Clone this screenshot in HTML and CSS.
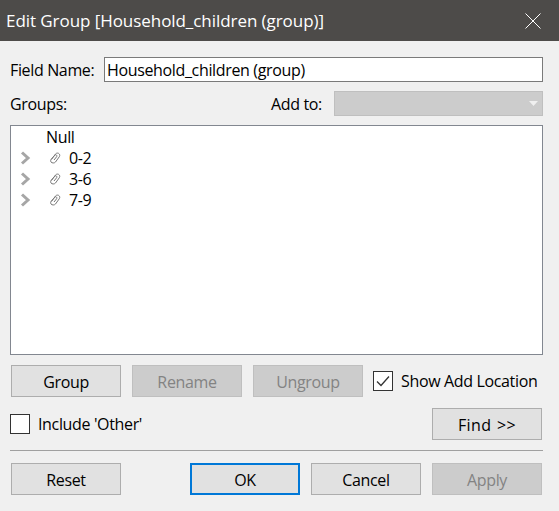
FILE: index.html
```html
<!DOCTYPE html>
<html>
<head>
    <title>Edit Group</title>
    <link rel="stylesheet" href="styles.css">
</head>
<body>
    <div class="titlebar">
        <span class="title">Edit Group [Household_children (group)]</span>
        <svg class="close" width="16" height="16" viewBox="0 0 16 16"><path d="M0.5 0.5L15.5 15.5M15.5 0.5L0.5 15.5" stroke="#fff" stroke-width="1" fill="none"/></svg>
    </div>
    <div class="content">
        <div class="row name-row">
            <label class="name-label">Field Name:</label>
            <input type="text" class="name-input" value="Household_children (group)">
        </div>
        <div class="row groups-row">
            <span class="groups-label">Groups:</span>
            <span class="add-label">Add to:</span>
            <div class="select">
                <svg width="9" height="5" viewBox="0 0 9 5"><path d="M0 0H9L4.5 5Z" fill="#f0f0f0"/></svg>
            </div>
        </div>
        <div class="list">
            <div class="item"><span class="leaf">Null</span></div>
            <div class="item">
                <svg class="chevron" width="11" height="14" viewBox="0 0 11 14"><path d="M2 1.500L8 7L2 12.500" stroke="#a6a6a6" stroke-width="3" fill="none"/></svg>
                <svg class="clip" width="12" height="12" viewBox="0 0 12 12"><path d="M2.500 7.500L6.500 2C7.500 0.800 9.500 0.800 10.300 2C11 3 10.800 4 10.200 4.900L6.500 10C5.500 11.300 3 11.300 2 10C1.400 9 1.600 8 2.200 7.200L5.800 3.200C6.300 2.600 7.500 2.700 7.800 3.500C8 4 7.800 4.500 7.500 4.900L5 8" stroke="#777" stroke-width="1" fill="none"/></svg>
                <span>0-2</span>
            </div>
            <div class="item">
                <svg class="chevron" width="11" height="14" viewBox="0 0 11 14"><path d="M2 1.500L8 7L2 12.500" stroke="#a6a6a6" stroke-width="3" fill="none"/></svg>
                <svg class="clip" width="12" height="12" viewBox="0 0 12 12"><path d="M2.500 7.500L6.500 2C7.500 0.800 9.500 0.800 10.300 2C11 3 10.800 4 10.200 4.900L6.500 10C5.500 11.300 3 11.300 2 10C1.400 9 1.600 8 2.200 7.200L5.800 3.200C6.300 2.600 7.500 2.700 7.800 3.500C8 4 7.800 4.500 7.500 4.900L5 8" stroke="#777" stroke-width="1" fill="none"/></svg>
                <span>3-6</span>
            </div>
            <div class="item">
                <svg class="chevron" width="11" height="14" viewBox="0 0 11 14"><path d="M2 1.500L8 7L2 12.500" stroke="#a6a6a6" stroke-width="3" fill="none"/></svg>
                <svg class="clip" width="12" height="12" viewBox="0 0 12 12"><path d="M2.500 7.500L6.500 2C7.500 0.800 9.500 0.800 10.300 2C11 3 10.800 4 10.200 4.900L6.500 10C5.500 11.300 3 11.300 2 10C1.400 9 1.600 8 2.200 7.200L5.800 3.200C6.300 2.600 7.500 2.700 7.800 3.500C8 4 7.800 4.500 7.500 4.900L5 8" stroke="#777" stroke-width="1" fill="none"/></svg>
                <span>7-9</span>
            </div>
        </div>
        <div class="row action-row">
            <button class="btn">Group</button>
            <button class="btn disabled">Rename</button>
            <button class="btn disabled">Ungroup</button>
            <div class="check location-check">
                <span class="box">
                    <svg width="14" height="12" viewBox="0 0 14 12"><path d="M1 6.500L5 10.500L13 1.500" stroke="#333" stroke-width="1.300" fill="none"/></svg>
                </span>
                <span>Show Add Location</span>
            </div>
        </div>
        <div class="row other-row">
            <div class="check">
                <span class="box"></span>
                <span>Include 'Other'</span>
            </div>
            <button class="btn find">Find &gt;&gt;</button>
        </div>
        <div class="row footer">
            <button class="btn">Reset</button>
            <button class="btn default ok">OK</button>
            <button class="btn">Cancel</button>
            <button class="btn disabled">Apply</button>
        </div>
    </div>
</body>
</html>
```

FILE: styles.css
```css
html, body {
    margin: 0;
    height: 100%;
}
body {
    background-color: #f0f0f0;
    font-family: "Open Sans", "Noto Sans", sans-serif;
    font-size: 16px;
    letter-spacing: -0.35px;
    color: #000;
    overflow: hidden;
}
.titlebar {
    height: 41px;
    background-color: #4d4b49;
    color: #fff;
    display: flex;
    align-items: center;
    justify-content: space-between;
    padding: 0 18px 0 6px;
    box-sizing: border-box;
}
.title {
    font-size: 17px;
    letter-spacing: -0.06px;
}
.content {
    padding: 16px 16px 0 10px;
}
.row {
    display: flex;
    align-items: center;
}
.name-row {
    height: 25px;
}
.name-label {
    width: 94px;
}
.name-input {
    flex: 1;
    height: 25px;
    box-sizing: border-box;
    border: 1px solid #7a7a7a;
    padding: 0 2px;
    margin: 0;
    outline: none;
    font: inherit;
    letter-spacing: inherit;
    background-color: #fff;
    color: #000;
}
.groups-row {
    height: 25px;
    margin-top: 9px;
}
.groups-label {
    width: 261px;
}
.add-label {
    width: 63px;
}
.select {
    flex: 1;
    height: 25px;
    box-sizing: border-box;
    background-color: #cccccc;
    border: 1px solid #bfbfbf;
    display: flex;
    align-items: center;
    justify-content: flex-end;
    padding-right: 4px;
}
.list {
    height: 230px;
    box-sizing: border-box;
    margin-top: 9px;
    background-color: #fff;
    border: 1px solid #828790;
    padding: 0 0 0 9px;
}
.item {
    height: 21px;
    display: flex;
    align-items: center;
}
.leaf {
    margin-left: 26px;
}
.chevron {
    flex: none;
}
.clip {
    margin-left: 18px;
    margin-right: 8px;
}
.btn {
    width: 110px;
    height: 32px;
    padding: 1px 0 0;
    box-sizing: border-box;
    font: inherit;
    letter-spacing: inherit;
    color: #000;
    background-color: #e1e1e1;
    border: 1px solid #adadad;
}
.btn.disabled {
    background-color: #cccccc;
    border-color: #bfbfbf;
    color: #838383;
}
.btn.default {
    border: 2px solid #0078d7;
}
.btn.find {
    letter-spacing: 0.4px;
    word-spacing: 1px;
}
.action-row {
    margin-top: 10px;
    margin-left: 1px;
    gap: 11px;
}
.check {
    display: flex;
    align-items: center;
    gap: 8px;
}
.location-check {
    margin-left: -1px;
}
.box {
    width: 20px;
    height: 20px;
    box-sizing: border-box;
    border: 1px solid #333;
    background-color: #fff;
    display: flex;
    align-items: center;
    justify-content: center;
}
.other-row {
    margin-top: 11px;
    justify-content: space-between;
    padding-right: 1px;
}
.footer {
    margin-top: 10px;
    padding: 12px 1px 0;
    border-top: 1px solid #a0a0a0;
    gap: 11px;
}
.ok {
    margin-left: 58px;
}
```
